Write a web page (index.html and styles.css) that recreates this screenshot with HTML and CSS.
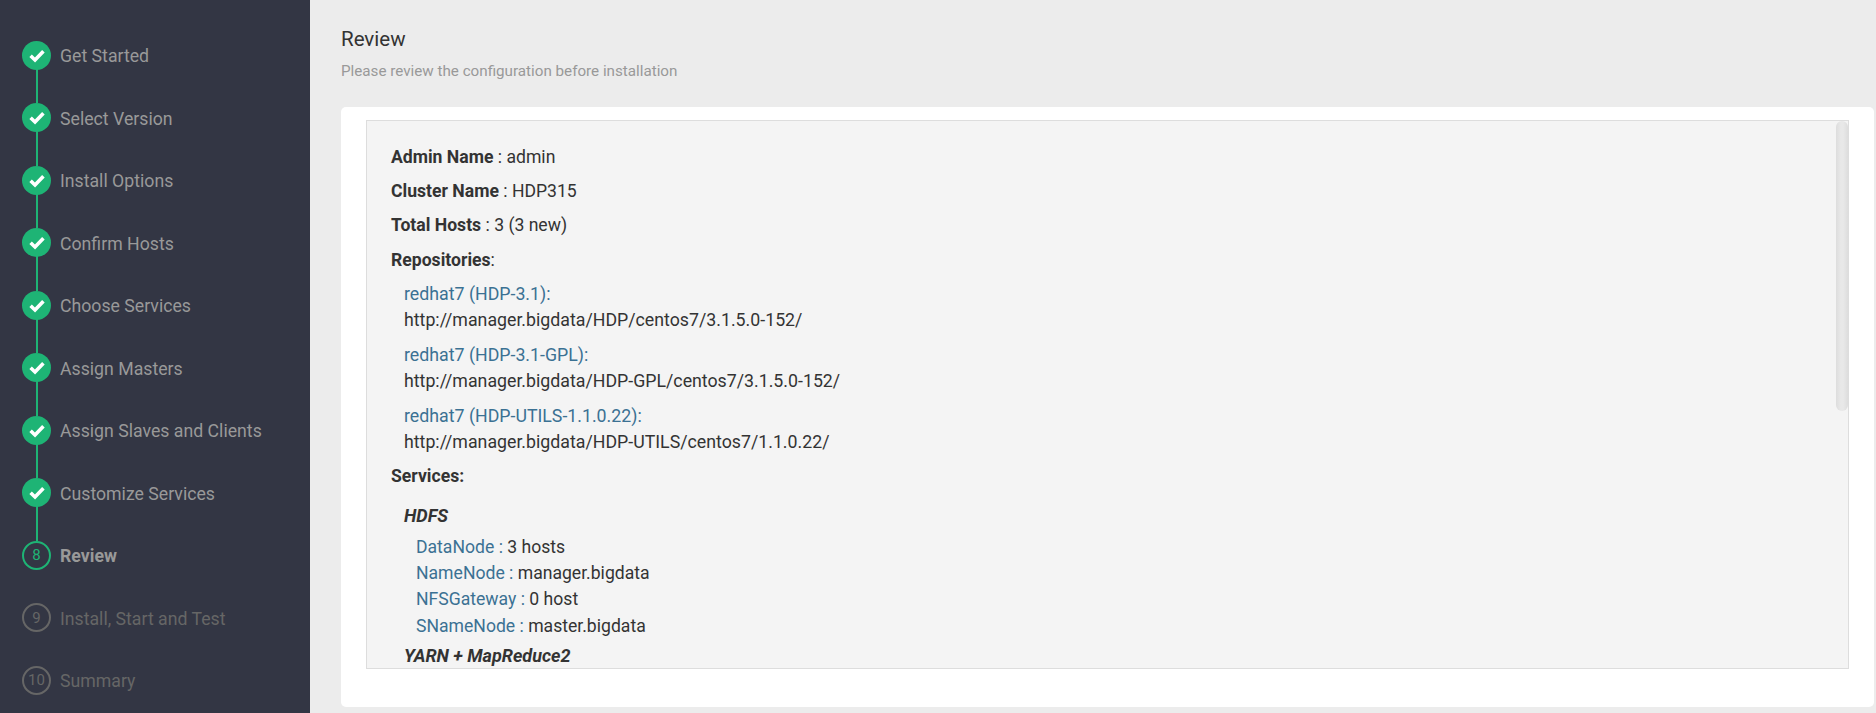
FILE: index.html
```html
<!DOCTYPE html>
<html lang="en">
<head>
    <meta charset="UTF-8">
    <title>Review</title>
    <link rel="stylesheet" href="styles.css">
</head>
<body>
    <div class="wizard">
        <ul class="steps">
            <li class="step done"><span class="dot"><svg viewBox="0 0 16 16"><path d="M1.6 8.8 L6 13 L14.4 4.2" /></svg></span><span class="label">Get Started</span></li>
            <li class="step done"><span class="dot"><svg viewBox="0 0 16 16"><path d="M1.6 8.8 L6 13 L14.4 4.2" /></svg></span><span class="label">Select Version</span></li>
            <li class="step done"><span class="dot"><svg viewBox="0 0 16 16"><path d="M1.6 8.8 L6 13 L14.4 4.2" /></svg></span><span class="label">Install Options</span></li>
            <li class="step done"><span class="dot"><svg viewBox="0 0 16 16"><path d="M1.6 8.8 L6 13 L14.4 4.2" /></svg></span><span class="label">Confirm Hosts</span></li>
            <li class="step done"><span class="dot"><svg viewBox="0 0 16 16"><path d="M1.6 8.8 L6 13 L14.4 4.2" /></svg></span><span class="label">Choose Services</span></li>
            <li class="step done"><span class="dot"><svg viewBox="0 0 16 16"><path d="M1.6 8.8 L6 13 L14.4 4.2" /></svg></span><span class="label">Assign Masters</span></li>
            <li class="step done"><span class="dot"><svg viewBox="0 0 16 16"><path d="M1.6 8.8 L6 13 L14.4 4.2" /></svg></span><span class="label">Assign Slaves and Clients</span></li>
            <li class="step done"><span class="dot"><svg viewBox="0 0 16 16"><path d="M1.6 8.8 L6 13 L14.4 4.2" /></svg></span><span class="label">Customize Services</span></li>
            <li class="step current"><span class="dot">8</span><span class="label">Review</span></li>
            <li class="step todo"><span class="dot">9</span><span class="label">Install, Start and Test</span></li>
            <li class="step todo"><span class="dot">10</span><span class="label">Summary</span></li>
        </ul>

        <div class="content">
            <h2>Review</h2>
            <p class="hint">Please review the configuration before installation</p>

            <div class="card">
                <div class="review-box">
                    <div class="thumb"></div>
                    <p class="row"><b>Admin Name</b> : admin</p>
                    <p class="row"><b>Cluster Name</b> : HDP315</p>
                    <p class="row"><b>Total Hosts</b> : 3 (3 new)</p>
                    <p class="row"><b>Repositories</b>:</p>

                    <div class="repo"><span class="blue">redhat7 (HDP-3.1):</span><br>http://manager.bigdata/HDP/centos7/3.1.5.0-152/</div>
                    <div class="repo"><span class="blue">redhat7 (HDP-3.1-GPL):</span><br>http://manager.bigdata/HDP-GPL/centos7/3.1.5.0-152/</div>
                    <div class="repo"><span class="blue">redhat7 (HDP-UTILS-1.1.0.22):</span><br>http://manager.bigdata/HDP-UTILS/centos7/1.1.0.22/</div>

                    <p class="row services"><b>Services:</b></p>

                    <div class="service">
                        <h4>HDFS</h4>
                        <div class="comp"><span class="blue">DataNode :</span> 3 hosts</div>
                        <div class="comp"><span class="blue">NameNode :</span> manager.bigdata</div>
                        <div class="comp"><span class="blue">NFSGateway :</span> 0 host</div>
                        <div class="comp"><span class="blue">SNameNode :</span> master.bigdata</div>
                    </div>
                    <div class="service">
                        <h4>YARN + MapReduce2</h4>
                    </div>
                </div>
            </div>
        </div>
    </div>
</body>
</html>
```

FILE: styles.css
```css
* {
    box-sizing: border-box;
}

html, body {
    height: 100%;
}

body {
    margin: 0;
    overflow: hidden;
    font-family: Roboto, "Liberation Sans", sans-serif;
    background-color: #ececec;
    color: #333;
}

.wizard {
    display: flex;
    height: 713px;
}

/* left column */
.steps {
    width: 310px;
    flex-shrink: 0;
    margin: 0;
    padding: 39px 0 0 22px;
    list-style: none;
    background-color: #333644;
}

.step {
    position: relative;
    display: flex;
    align-items: center;
    height: 62.5px;
    font-size: 17.7px;
    color: #999;
}

.step .dot {
    display: flex;
    align-items: center;
    justify-content: center;
    width: 29px;
    height: 29px;
    margin-top: -30px;
    border-radius: 50%;
    font-size: 15px;
    flex-shrink: 0;
}

.step .label {
    margin-left: 9px;
    margin-top: -28px;
}

.step.done .dot {
    background-color: #1eb475;
}

.step.done .dot svg {
    width: 16px;
    height: 16px;
    margin-top: -1px;
    fill: none;
    stroke: #fff;
    stroke-width: 3.6;
}

/* line between two dots */
.step.done::after {
    content: "";
    position: absolute;
    left: 14px;
    top: 29px;
    width: 2px;
    height: 35px;
    background-color: #1eb475;
}

.step.current .dot {
    border: 2px solid #1eb475;
    color: #1eb475;
}

.step.current .label {
    font-weight: bold;
}

.step.todo {
    color: #666;
}

.step.todo .dot {
    border: 2px solid #666;
}

/* right column */
.content {
    flex: 1;
    padding: 27px 2px 6px 31px;
    display: flex;
    flex-direction: column;
    min-width: 0;
}

h2 {
    margin: 0;
    font-size: 20.5px;
    font-weight: normal;
    line-height: 24px;
    color: #333;
}

.hint {
    margin: 10px 0 0;
    font-size: 15.2px;
    line-height: 20px;
    color: #999;
}

.card {
    flex: 1;
    margin-top: 26px;
    padding: 13px 25px 38px 25px;
    background-color: #fff;
    border-radius: 5px;
    min-height: 0;
}

.review-box {
    position: relative;
    height: 100%;
    overflow: hidden;
    padding: 23px 24px;
    background-color: #f4f4f4;
    border: 1px solid #ddd;
    font-size: 17.6px;
    line-height: 26px;
    color: #333;
}

.thumb {
    position: absolute;
    top: 0;
    right: 0;
    width: 12px;
    height: 290px;
    border-radius: 6px;
    background: linear-gradient(to right, #ddd, #e8e8e8 40%, #e8e8e8 60%, #ddd);
}

.row {
    margin: 0 0 8.2px;
}

.repo {
    margin: 0 0 9px 13px;
    font-size: 17.75px;
}

.services {
    margin: -1px 0 13px;
}

.blue {
    color: #3b7193;
}

.service {
    margin-left: 13px;
}

.service h4 {
    margin: 0;
    padding: 2px 0 6px;
    font-size: 18px;
    font-style: italic;
    font-weight: bold;
    line-height: 24px;
}

.service + .service h4 {
    padding-top: 5px;
}

.comp {
    margin-left: 12px;
    line-height: 26.3px;
}
```
